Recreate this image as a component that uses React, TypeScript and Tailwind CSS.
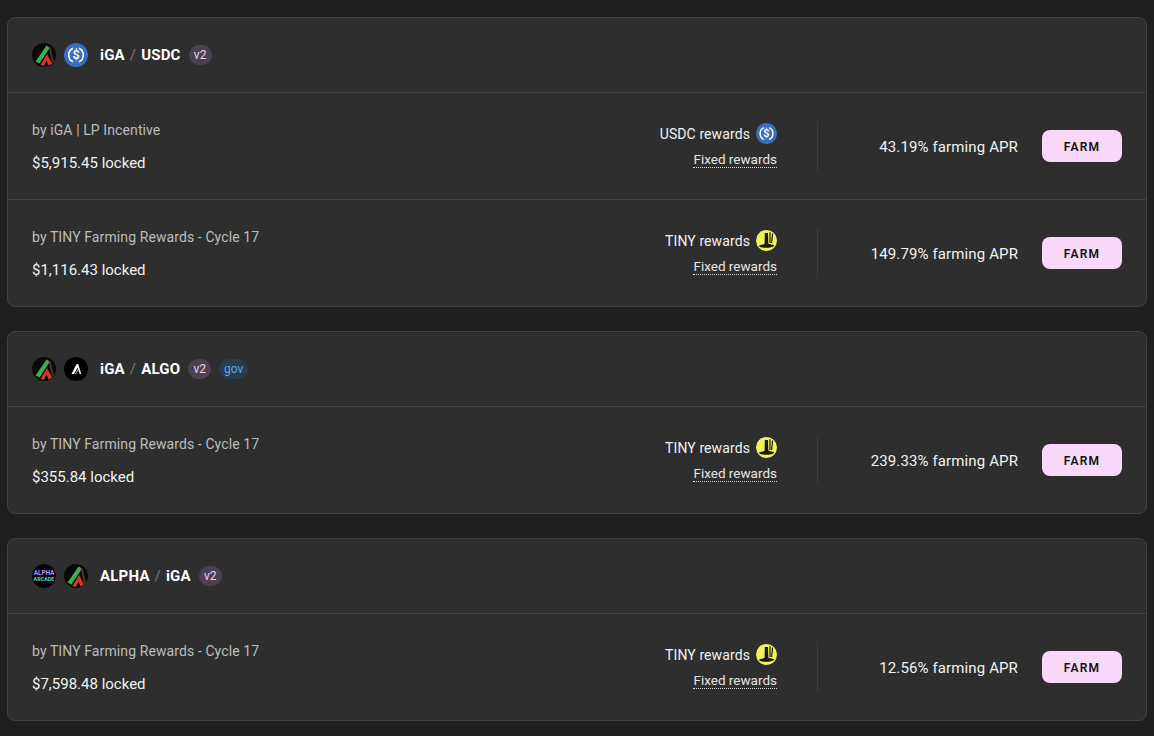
import React from 'react';

const font = { fontFamily: 'Roboto, "Liberation Sans", sans-serif' };

function IgaIcon() {
  return (
    <svg width="24" height="24" viewBox="0 0 24 24" className="shrink-0">
      <circle cx="12" cy="12" r="12" fill="#0a0a0a" />
      <path d="M3.5 18.5 L14.5 2.5 L18 4.5 L7.5 20.5 Z" fill="#3fae4d" />
      <path d="M16.5 4 L18.5 4 L22 19 L20 20 Z" fill="#4a3030" />
      <path d="M8.5 22 L15 11 L20 20.5 L16.5 22.5 L14.5 17.5 L12 23 Z" fill="#d8342c" />
    </svg>
  );
}

function UsdcIcon({ size = 24 }: { size?: number }) {
  return (
    <svg width={size} height={size} viewBox="0 0 24 24" className="shrink-0">
      <circle cx="12" cy="12" r="12" fill="#3a6fbf" />
      <path d="M9 5.2 A7.5 7.5 0 0 0 9 18.8" fill="none" stroke="#fff" strokeWidth="1.6" />
      <path d="M15 5.2 A7.5 7.5 0 0 1 15 18.8" fill="none" stroke="#fff" strokeWidth="1.6" />
      <text x="12" y="16.4" textAnchor="middle" fontSize="12.5" fontWeight="600" fill="#fff" fontFamily="Roboto, sans-serif">$</text>
    </svg>
  );
}

function AlgoIcon() {
  return (
    <svg width="24" height="24" viewBox="0 0 24 24" className="shrink-0">
      <circle cx="12" cy="12" r="12" fill="#000" />
      <path d="M7.5 17 L12.6 7 L14.2 7 L17.2 17 L15.7 17 L13.7 10.6 L10 17 Z" fill="#fff" />
      <path d="M11.4 17 L14.8 11.4" stroke="#fff" strokeWidth="0.8" />
    </svg>
  );
}

function AlphaIcon() {
  return (
    <svg width="24" height="24" viewBox="0 0 24 24" className="shrink-0">
      <circle cx="12" cy="12" r="12" fill="#05050a" />
      <text x="12" y="11" textAnchor="middle" fontSize="6.4" fontWeight="700" fill="#b58be8" fontFamily="Roboto, sans-serif">ALPHA</text>
      <text x="12" y="17" textAnchor="middle" fontSize="5.4" fontWeight="700" fill="#4fd6d6" fontFamily="Roboto, sans-serif">ARCADE</text>
    </svg>
  );
}

function TinyIcon() {
  return (
    <svg width="21" height="21" viewBox="0 0 21 21" className="shrink-0">
      <circle cx="10.5" cy="10.5" r="10.5" fill="#eef35e" />
      <path d="M2.8 16 C4.5 14.6 7.6 14.8 8.6 13.6 L8.8 3 L12 3 L12.3 13.6 C13.5 14.6 16.5 14.4 18.4 15.4 C17 17.2 13.5 17.8 10.5 17.8 C7.5 17.8 4.2 17.4 2.8 16 Z" fill="#1a1a12" />
      <path d="M14 2.2 L14 13 M16.6 3.5 L15.6 13" stroke="#1a1a12" strokeWidth="1.2" fill="none" />
    </svg>
  );
}

function Badge({ label, kind = 'v2' }: { label: string; kind?: 'v2' | 'gov' }) {
  if (kind === 'gov') {
    return (
      <span className="ml-2 flex h-5 w-[29px] items-center justify-center rounded-full bg-[#2a3d4e] text-[12px] text-[#5aa7e6]">
        {label}
      </span>
    );
  }
  return (
    <span className="ml-2 flex h-5 w-[23px] items-center justify-center rounded-full bg-[#4b4150] text-[12px] text-[#eed4f2]">
      {label}
    </span>
  );
}

type Row = {
  by: string;
  locked: string;
  token: 'USDC' | 'TINY';
  apr: string;
};

function FarmRow({ by, locked, token, apr }: Row) {
  return (
    <div className="flex h-[107px] items-center border-t border-[#414141] pl-6 pr-6">
      <div className="flex flex-1 flex-col gap-[15px] pt-[2px]">
        <div className="text-[14px] leading-[17px] tracking-[0.1px] text-[#bdbdbd]">{by}</div>
        <div className="text-[15px] leading-[18px] text-[#f2f2f2]">{locked}</div>
      </div>
      <div className="flex flex-col items-end gap-[7px] pb-[2px]">
        <div className="flex h-[21px] items-center gap-[6px] text-[14px] tracking-[0.1px] text-[#f2f2f2]">
          <span className="pt-[2px]">{token} rewards</span>
          {token === 'USDC' ? <UsdcIcon size={21} /> : <TinyIcon />}
        </div>
        <div className="border-b border-dotted border-[#d8d8d8] text-[13.5px] leading-[16px] text-[#e6e6e6]">
          Fixed rewards
        </div>
      </div>
      <div className="ml-10 h-[50px] w-px bg-[#3c3c3c]" />
      <div className="w-[200px] pt-[2px] text-right text-[15px] tracking-[0.12px] text-[#f2f2f2]">{apr}</div>
      <button className="ml-6 h-8 w-20 rounded-lg bg-[#f9d8f9] pt-[1px] text-[12px] font-semibold tracking-[1.2px] text-[#111]">
        FARM
      </button>
    </div>
  );
}

type Pool = {
  icons: React.ReactNode[];
  a: string;
  b: string;
  gov?: boolean;
  rows: Row[];
};

const cycle = 'by TINY Farming Rewards - Cycle 17';

const pools: Pool[] = [
  {
    icons: [<IgaIcon key="a" />, <UsdcIcon key="b" />],
    a: 'iGA',
    b: 'USDC',
    rows: [
      { by: 'by iGA | LP Incentive', locked: '$5,915.45 locked', token: 'USDC', apr: '43.19% farming APR' },
      { by: cycle, locked: '$1,116.43 locked', token: 'TINY', apr: '149.79% farming APR' },
    ],
  },
  {
    icons: [<IgaIcon key="a" />, <AlgoIcon key="b" />],
    a: 'iGA',
    b: 'ALGO',
    gov: true,
    rows: [{ by: cycle, locked: '$355.84 locked', token: 'TINY', apr: '239.33% farming APR' }],
  },
  {
    icons: [<AlphaIcon key="a" />, <IgaIcon key="b" />],
    a: 'ALPHA',
    b: 'iGA',
    rows: [{ by: cycle, locked: '$7,598.48 locked', token: 'TINY', apr: '12.56% farming APR' }],
  },
];

export default function App() {
  return (
    <div style={font} className="flex h-[736px] flex-col gap-6 overflow-hidden bg-[#1f1f1f] px-[7px] pt-[17px]">
      {pools.map((pool) => (
        <div key={pool.a + pool.b} className="rounded-lg border border-[#414141] bg-[#2e2e2e]">
          <div className="flex h-[74px] items-center px-6">
            <div className="flex gap-2">{pool.icons}</div>
            <div className="ml-3 text-[15px] font-bold tracking-[0.2px] text-white">
              {pool.a} <span className="mx-[1px] font-normal text-[#777]">/</span> {pool.b}
            </div>
            <Badge label="v2" />
            {pool.gov && <Badge label="gov" kind="gov" />}
          </div>
          {pool.rows.map((row) => (
            <FarmRow key={row.by + row.locked} {...row} />
          ))}
        </div>
      ))}
    </div>
  );
}
